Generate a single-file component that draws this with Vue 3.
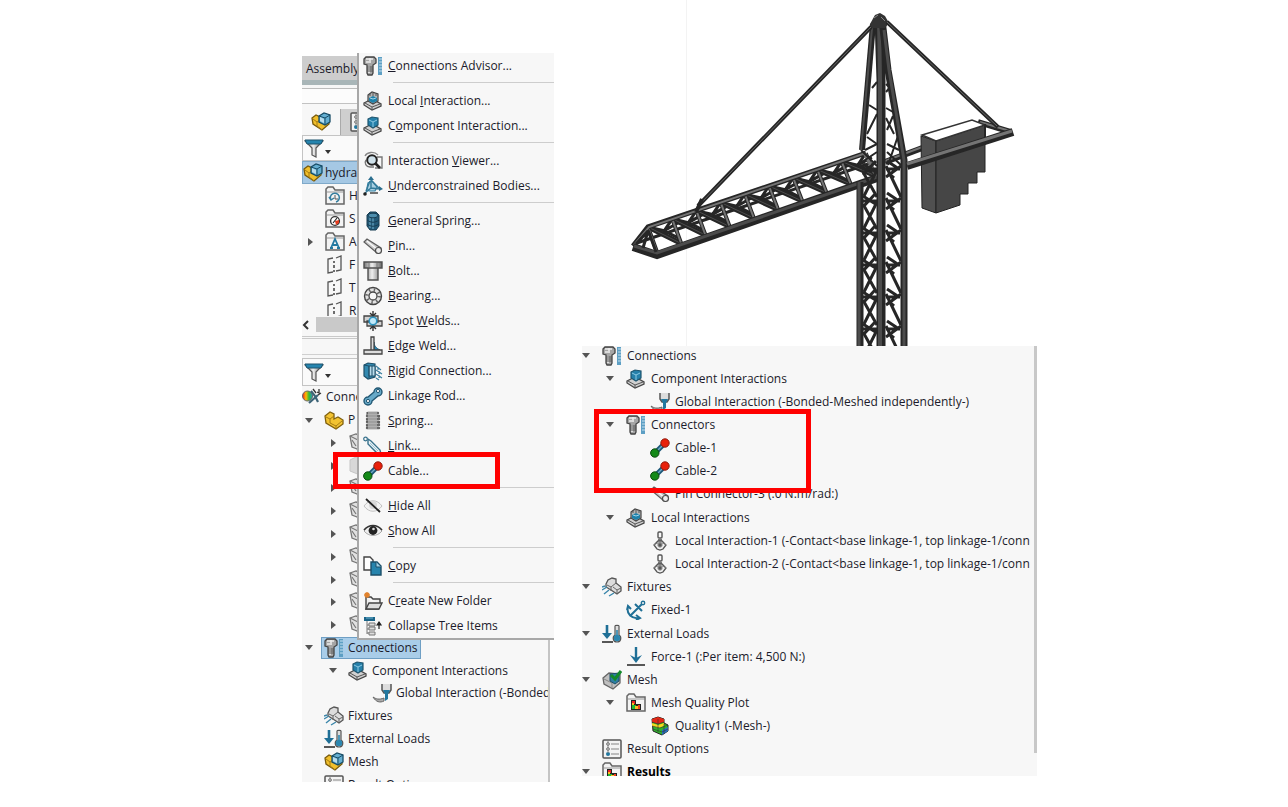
<script setup>
import { ref } from 'vue'

let menuGroups = ref([
  [{ icon: 'advisor', pre: '', key: 'C', post: 'onnections Advisor...' }],
  [
    { icon: 'local', pre: 'Local ', key: 'I', post: 'nteraction...' },
    { icon: 'component', pre: 'C', key: 'o', post: 'mponent Interaction...' }
  ],
  [
    { icon: 'viewer', pre: 'Interaction ', key: 'V', post: 'iewer...' },
    { icon: 'under', pre: '', key: 'U', post: 'nderconstrained Bodies...' }
  ],
  [
    { icon: 'gspring', pre: '', key: 'G', post: 'eneral Spring...' },
    { icon: 'pin', pre: '', key: 'P', post: 'in...' },
    { icon: 'bolt', pre: '', key: 'B', post: 'olt...' },
    { icon: 'bearing', pre: '', key: 'B', post: 'earing...' },
    { icon: 'spot', pre: 'Spot ', key: 'W', post: 'elds...' },
    { icon: 'edge', pre: '', key: 'E', post: 'dge Weld...' },
    { icon: 'rigid', pre: '', key: 'R', post: 'igid Connection...' },
    { icon: 'rod', pre: 'Linkage Rod...', key: '', post: '' },
    { icon: 'spring', pre: '', key: 'S', post: 'pring...' },
    { icon: 'link', pre: '', key: 'L', post: 'ink...' },
    { icon: 'cable', pre: 'Cable...', key: '', post: '', marked: true }
  ],
  [
    { icon: 'hide', pre: '', key: 'H', post: 'ide All' },
    { icon: 'show', pre: '', key: 'S', post: 'how All' }
  ],
  [{ icon: 'copy', pre: '', key: 'C', post: 'opy' }],
  [
    { icon: 'newfolder', pre: 'C', key: 'r', post: 'eate New Folder' },
    { icon: 'collapse', pre: 'Collapse Tree Items', key: '', post: '' }
  ]
])

let featureTree = ref([
  { icon: 'history', text: 'H' },
  { icon: 'sensor', text: 'S' },
  { icon: 'annot', text: 'A', arrow: 'right' },
  { icon: 'plane', text: 'F' },
  { icon: 'plane', text: 'T' },
  { icon: 'plane', text: 'R' }
])

let studyTree = ref([
  { icon: 'study', text: 'Conne', level: 'root' },
  { icon: 'partplain', text: 'P', level: 'one', arrow: 'down' },
  ...Array.from({ length: 9 }, (v, i) => ({
    icon: i === 1 ? 'bodyoff' : 'body',
    text: '',
    level: 'two',
    arrow: 'right'
  })),
  { icon: 'advisor', text: 'Connections', level: 'one', arrow: 'down', selected: true },
  { icon: 'component', text: 'Component Interactions', level: 'two', arrow: 'down' },
  { icon: 'global', text: 'Global Interaction (-Bonded', level: 'three' },
  { icon: 'fixtures', text: 'Fixtures', level: 'one' },
  { icon: 'loads', text: 'External Loads', level: 'one' },
  { icon: 'part', text: 'Mesh', level: 'one' },
  { icon: 'options', text: 'Result Options', level: 'one' }
])

let resultTree = ref([
  { icon: 'advisor', text: 'Connections', level: 'one', arrow: 'down' },
  { icon: 'component', text: 'Component Interactions', level: 'two', arrow: 'down' },
  { icon: 'global', text: 'Global Interaction (-Bonded-Meshed independently-)', level: 'three' },
  { icon: 'advisor', text: 'Connectors', level: 'two', arrow: 'down' },
  { icon: 'cable', text: 'Cable-1', level: 'three' },
  { icon: 'cable', text: 'Cable-2', level: 'three' },
  { icon: 'pin', text: 'Pin Connector-3 (:0 N.m/rad:)', level: 'three' },
  { icon: 'local', text: 'Local Interactions', level: 'two', arrow: 'down', group: true },
  { icon: 'contact', text: 'Local Interaction-1 (-Contact<base linkage-1, top linkage-1/conn', level: 'three' },
  { icon: 'contact', text: 'Local Interaction-2 (-Contact<base linkage-1, top linkage-1/conn', level: 'three' },
  { icon: 'fixtures', text: 'Fixtures', level: 'one', arrow: 'down' },
  { icon: 'anchor', text: 'Fixed-1', level: 'two' },
  { icon: 'loads', text: 'External Loads', level: 'one', arrow: 'down', group: true },
  { icon: 'force', text: 'Force-1 (:Per item: 4,500 N:)', level: 'two' },
  { icon: 'meshdone', text: 'Mesh', level: 'one', arrow: 'down' },
  { icon: 'plots', text: 'Mesh Quality Plot', level: 'two', arrow: 'down' },
  { icon: 'quality', text: 'Quality1 (-Mesh-)', level: 'three' },
  { icon: 'options', text: 'Result Options', level: 'one' },
  { icon: 'plots', text: 'Results', level: 'one', arrow: 'down', bold: true }
])

//------------------------------crane geometry---------------------------//

// boom: top and bottom chord nodes, nine bays
let top = (i) => [648 + i * 24.2, 227 - i * 8.2]
let bottom = (i) => [657 + i * 24.2, 252 - i * 8.5]
let back = (i) => [640 + i * 24.2, 239 - i * 8.2]

let posts = ''
let braces = ''
let backBraces = ''
for (let i = 0; i < 10; i++) {
  posts += `M${top(i)}L${bottom(i)}`
  if (i < 9) {
    braces += `M${top(i)}L${bottom(i + 1)}`
    backBraces += `M${back(i + 1)}L${top(i)}M${back(i + 1)}l14 -8M${back(i + 1)}l16 8M${back(i + 1)}l8 -12`
  }
}

// mast: zigzag lattice between the legs, one cell every 32px
let lattice = ''
let latticeBack = ''
for (let y = 164; y < 350; y += 32) {
  lattice += `M886 ${y + 2}L901 ${y + 33}M901 ${y + 2}L886 ${y + 13}M886 ${y + 5}H900M887 ${y - 3}l12 8M888 ${y + 9}l6 5`
  latticeBack += `M863 ${y + 8}l14 25M877 ${y + 6}l-13 26M862 ${y + 5}h15M863 ${y}l14 9M876 ${y - 3}l-13 14`
}

let towerLattice =
  'M872 88L877 82M869 105L877 110M867 134L877 114M867 137L877 144M865 150L877 144M862 162L877 152M861 150L877 166' +
  'M886 84L892 90M886 92L891 86M886 108L893 112M887 130L893 116M886 118L894 134M887 144L899 150M888 165L898 136M887 152L902 166'
</script>

<template>
  <svg class="sprite" aria-hidden="true">
    <defs>
      <linearGradient id="metal" x1="0" x2="1">
        <stop offset="0" stop-color="#777" />
        <stop offset=".45" stop-color="#eee" />
        <stop offset="1" stop-color="#666" />
      </linearGradient>
      <linearGradient id="rainbow" x1="0" x2="1">
        <stop offset="0" stop-color="#e22" />
        <stop offset=".35" stop-color="#fb0" />
        <stop offset=".65" stop-color="#3b3" />
        <stop offset="1" stop-color="#29c" />
      </linearGradient>
    </defs>
    <symbol id="advisor" viewBox="0 0 20 20">
      <path d="M15 1h4v18h-4z" fill="#5d9fc4" />
      <path d="M16 3h3M16 6h3M16 9h3M16 12h3M16 15h3" stroke="#c5dfed" />
      <path d="M1 3l2-2h8l2 2v4l-3 2v8l-1 2H5l-1-2V9L1 8z" fill="#a5a5a5" stroke="#444" stroke-width="1.3" />
      <path d="M3 3h7M3 6h3M7 2v5M6 10v7" stroke="#ececec" stroke-width="1.6" />
      <path d="M4 11h6M4 13h6M4 15h6" stroke="#555" />
    </symbol>
    <symbol id="local" viewBox="0 0 20 20">
      <path d="M1 12l8-4 9 5v2l-9 4-8-5z" fill="#d0d0d0" stroke="#484848" stroke-width="1.3" />
      <path d="M2 12l7 4 8-3M9 16v3" fill="none" stroke="#555" />
      <path d="M5 4l4-3 6 2v7l-5 3-5-3z" fill="#b5b5b5" stroke="#444" stroke-width="1.2" />
      <path d="M7 2v3M10 2v3M13 3v2" stroke="#555" />
      <path d="M6 7l4-2 4 2v3l-4 2-4-2z" fill="#1e81aa" />
      <path d="M7 7l3 1 3-1" fill="none" stroke="#a5d5e8" />
    </symbol>
    <symbol id="component" viewBox="0 0 20 20">
      <path d="M1 12l8-4 9 5v2l-9 4-8-5z" fill="#d0d0d0" stroke="#484848" stroke-width="1.3" />
      <path d="M2 12l7 4 8-3M9 16v3" fill="none" stroke="#555" />
      <path d="M5 3l4-2 6 1v7l-5 3-5-3z" fill="#2580aa" stroke="#20566f" stroke-width="1.2" />
      <path d="M6 4l4 2 4-2M10 6v5" fill="none" stroke="#8cc9e3" />
    </symbol>
    <symbol id="viewer" viewBox="0 0 20 20">
      <path d="M3 9c-2 3 0 7 4 7h4M14 6h5v11h-7" fill="none" stroke="#777" stroke-width="1.4" />
      <path d="M2 5c2-4 9-5 13-1" fill="none" stroke="#888" stroke-width="1.3" />
      <circle cx="9" cy="9" r="4.800" fill="#cfe1ea" stroke="#222" stroke-width="2" />
      <path d="M12 12l5 5" stroke="#222" stroke-width="2.600" />
    </symbol>
    <symbol id="under" viewBox="0 0 20 20">
      <path d="M5 7l4-2 5 6-2 4H6l-2-3z" fill="#a9d0e2" stroke="#3583a5" stroke-width="1.2" />
      <path d="M8 2v10l9 1M8 12l-6 5M12 13l4-1M8 4l8 8M7 5l-4 10" fill="none" stroke="#347a99" stroke-width="1.4" />
      <path d="M8 0l3 4H5zM20 13l-4-3v5z" fill="#2a6e8e" />
      <circle cx="2" cy="18" r="1.800" fill="#222" />
      <path d="M7 17h8" stroke="#3a3a3a" stroke-width="1.4" />
    </symbol>
    <symbol id="gspring" viewBox="0 0 20 20">
      <path d="M4 4l3-3h6l3 3v11l-3 4H7l-3-4z" fill="#235a78" stroke="#173d52" />
      <path d="M7 5v12M10 6v12" stroke="#5f9dbb" stroke-width="1.3" />
      <ellipse cx="10" cy="4.500" rx="4.500" ry="2.300" fill="#4d8eae" stroke="#173d52" />
      <path d="M4 9c4 3 8 3 12 0M4 13c4 3 8 3 12 0" fill="none" stroke="#173d52" />
    </symbol>
    <symbol id="pin" viewBox="0 0 20 20">
      <path d="M1 6l3-3 14 9c1 3-1 6-4 5z" fill="#c9c9c9" stroke="#5d5d5d" stroke-width="1.2" />
      <path d="M4 5l11 9" stroke="#fafafa" stroke-width="1.4" />
      <circle cx="15.500" cy="14.500" r="3" fill="#eee" stroke="#4d4d4d" stroke-width="1.2" />
    </symbol>
    <symbol id="bolt" viewBox="0 0 20 20">
      <path d="M1 1h18v6H1zM5 7h10v12H5z" fill="url(#metal)" stroke="#4f4f4f" stroke-width="1.4" />
      <path d="M6 2v4M14 2v4" stroke="#777" />
    </symbol>
    <symbol id="bearing" viewBox="0 0 20 20">
      <circle cx="10" cy="10" r="8.500" fill="#e2e2e2" stroke="#444" stroke-width="1.4" />
      <circle cx="10" cy="10" r="6.200" fill="none" stroke="#666" stroke-width="3.400" stroke-dasharray="1.400 3.470" />
      <circle cx="10" cy="10" r="4" fill="#f7f7f7" stroke="#444" stroke-width="1.3" />
    </symbol>
    <symbol id="spot" viewBox="0 0 20 20">
      <path d="M1 5h14v6H1zM4 10h15v5H4z" fill="#d2d2d2" stroke="#444" stroke-width="1.3" />
      <path d="M10 0v5M7 2l3 3 3-3M10 20v-5M7 18l3-3 3 3" fill="none" stroke="#333" stroke-width="1.4" />
      <circle cx="10" cy="10" r="3.800" fill="#c3eafa" stroke="#2d94c0" stroke-width="1.6" />
    </symbol>
    <symbol id="edge" viewBox="0 0 20 20">
      <path d="M11 6c0 4 2 6 6 8h-6z" fill="#2688b5" stroke="#1d536d" />
      <path d="M1 14h18v4H1zM8 1h3v13H8z" fill="#ddd" stroke="#444" stroke-width="1.3" />
    </symbol>
    <symbol id="rigid" viewBox="0 0 20 20">
      <path d="M1 4l4-2 7 1v13l-7 2-4-3z" fill="#3289b0" stroke="#1d4f69" stroke-width="1.2" />
      <path d="M6 5h6v10H6z" fill="#b9dcec" stroke="#1d4f69" />
      <path d="M1 4l5 1v12M9 5v10" fill="none" stroke="#1d4f69" />
      <path d="M13 5l5 4M13 9l6 4M13 13l6 4M13 17l3 2M15 6v3M16 10v3M16 14v3" stroke="#397fa0" stroke-width="1.2" />
    </symbol>
    <symbol id="rod" viewBox="0 0 20 20">
      <path d="M11 6a4 4 0 1 1 4 4l-6 5a4 4 0 1 1-4-4z" fill="#67a9c8" stroke="#215773" stroke-width="1.4" />
      <circle cx="15" cy="5" r="1.600" fill="#f7f7f7" stroke="#215773" />
      <circle cx="5" cy="15" r="1.600" fill="#f7f7f7" stroke="#215773" />
    </symbol>
    <symbol id="spring" viewBox="0 0 20 20">
      <path d="M5 2h10M4 5h12M4 8h12M4 11h12M4 14h12M4 17h12" stroke="#6a6a6a" stroke-width="2.400" stroke-linecap="round" />
      <path d="M5 2h9M5 5h9M5 8h9M5 11h9M5 14h9M5 17h9" stroke="#d5d5d5" stroke-width="1" />
      <path d="M4 1v3M16 4v3M4 8v3M16 10v3M4 14v3" stroke="#555" />
    </symbol>
    <symbol id="link" viewBox="0 0 20 20">
      <path d="M5 3l3 2 9 9 1 4-4-1-9-9z" fill="#e8f1f5" stroke="#37718c" stroke-width="1.4" />
      <path d="M7 7l8 8" stroke="#9cc4d6" />
      <circle cx="2.500" cy="3" r="1.800" fill="#f7f7f7" stroke="#37718c" stroke-width="1.2" />
      <circle cx="17.500" cy="17.500" r="1.500" fill="#37718c" />
    </symbol>
    <symbol id="cable" viewBox="0 0 20 20">
      <path d="M5 15L15 5" stroke="#1e5878" stroke-width="5" />
      <path d="M5 15L15 5" stroke="#6fa9c7" stroke-width="1.5" />
      <circle cx="15" cy="5" r="4.200" fill="#e8200b" stroke="#8f1c10" />
      <circle cx="4.800" cy="15" r="4.200" fill="#148a18" stroke="#0e4a12" />
    </symbol>
    <symbol id="hide" viewBox="0 0 20 20">
      <path d="M1 10c5-7 13-7 18 0-5 7-13 7-18 0z" fill="#f3f3f3" stroke="#c2c2c2" />
      <circle cx="10" cy="9" r="4" fill="#d8d8d8" />
      <path d="M3 3l14 13" stroke="#222" stroke-width="1.8" />
    </symbol>
    <symbol id="show" viewBox="0 0 20 20">
      <path d="M1 10c5-7 13-7 18 0-5 6-13 6-18 0z" fill="#eee" stroke="#aaa" />
      <path d="M1 9c5-6 13-6 18 0" fill="none" stroke="#333" stroke-width="1.6" />
      <circle cx="10" cy="9.500" r="4.400" fill="#222" />
      <circle cx="10.500" cy="8" r="1.300" fill="#ddd" />
    </symbol>
    <symbol id="copy" viewBox="0 0 20 20">
      <path d="M1 1h6l3 3v10H1z" fill="#fff" stroke="#444" stroke-width="1.4" />
      <path d="M8 6h6l4 4v9H8z" fill="#2784ad" stroke="#1c4f69" stroke-width="1.4" />
      <path d="M13 6v5h5" fill="#a3d0e4" stroke="#1c4f69" />
    </symbol>
    <symbol id="newfolder" viewBox="0 0 20 20">
      <path d="M3 6h5l2 2h7v4M3 6v12h13" fill="#eee" stroke="#444" stroke-width="1.4" />
      <path d="M6 12h13l-3 6H3z" fill="#ddd" stroke="#444" stroke-width="1.4" />
      <path d="M4 1v6M1 4h6M2 2l4 4M6 2L2 6" stroke="#e0812c" stroke-width="1.5" />
    </symbol>
    <symbol id="collapse" viewBox="0 0 20 20">
      <path d="M1 1h11v4H1z" fill="#1b6488" />
      <path d="M3 2h7" stroke="#6fb4d2" />
      <path d="M4 5v13M4 9h3M4 13h3M4 17h3" fill="none" stroke="#777" />
      <path d="M6 7h6v3H6zM6 11h6v3H6zM6 16h6v3H6z" fill="#ddd" stroke="#777" />
      <path d="M16 13V8M14 9l2-3 2 3z" stroke="#222" stroke-width="1.2" fill="#222" />
    </symbol>
    <symbol id="part" viewBox="0 0 20 20">
      <path d="M1 6l4-3 4 2v5l9-4v6l-7 6-9-6z" fill="#f1bf2b" stroke="#785a0c" stroke-width="1.3" />
      <path d="M2 7l4 3v4l5 4M6 10l3-2" fill="none" stroke="#a57c12" />
      <path d="M8 4l5-3 6 2v7l-5 3-6-3z" fill="#64aed1" stroke="#174c66" stroke-width="1.3" />
      <path d="M8 4l6 2 5-3M14 6v7" fill="none" stroke="#174c66" />
      <path d="M9 5l4 2v4l-4-2z" fill="#b8dcec" />
    </symbol>
    <symbol id="partplain" viewBox="0 0 20 20">
      <path d="M1 6l5-4 4 2v5l4-2 5 3v4l-7 5-10-6z" fill="#f3c331" stroke="#80610f" stroke-width="1.3" />
      <path d="M2 7l4 2v4l6 3 6-5M6 9l4-3M12 16v3" fill="none" stroke="#a57c12" />
    </symbol>
    <symbol id="filter" viewBox="0 0 20 20">
      <path d="M1 3h18l-7 7v9l-4-2v-7z" fill="url(#metal)" stroke="#555" stroke-width="1.2" />
      <path d="M1 2h18l-2 4H3z" fill="#2584ae" stroke="#1d536d" />
    </symbol>
    <symbol id="folder" viewBox="0 0 20 20">
      <path d="M1 18V3l2-2h5l2 3h9v14z" fill="#f3f3f3" stroke="#666" stroke-width="1.5" />
      <path d="M2 6h16" stroke="#999" />
    </symbol>
    <symbol id="history" viewBox="0 0 20 20">
      <use href="#folder" />
      <path d="M6 14a4.500 4.500 0 1 1 5 2M4 11l2 3 3-2" fill="none" stroke="#347d9e" stroke-width="1.5" />
      <path d="M10 9v4h3" fill="none" stroke="#555" />
    </symbol>
    <symbol id="sensor" viewBox="0 0 20 20">
      <use href="#folder" />
      <circle cx="10" cy="12" r="4.400" fill="#fff" stroke="#333" stroke-width="1.4" />
      <path d="M10 12l4-1v3l-3 2z" fill="#e43a1c" />
      <path d="M8 14l4-5" stroke="#222" stroke-width="1.2" />
    </symbol>
    <symbol id="annot" viewBox="0 0 20 20">
      <use href="#folder" />
      <path d="M6 16l4-9 4 9M5 16h3M12 16h3M8 13h4" fill="none" stroke="#2278a0" stroke-width="1.8" />
    </symbol>
    <symbol id="plane" viewBox="0 0 20 20">
      <path d="M8 3L3 4v14l5-1M11 3l5-2v14l-5 1" fill="none" stroke="#555" stroke-width="1.3" />
      <path d="M9 6v2M9 10v3M9 15v2" stroke="#333" stroke-width="1.4" />
    </symbol>
    <symbol id="study" viewBox="0 0 20 20">
      <circle cx="5.500" cy="9" r="5" fill="url(#rainbow)" stroke="#666" />
      <path d="M9 4l4 5 3 6M16 8l-9 8" fill="none" stroke="#3d6477" stroke-width="2.200" />
      <path d="M11 2l3 4M17 2v4l-2-1M19 6l-3 2" fill="none" stroke="#333" stroke-width="1.3" />
    </symbol>
    <symbol id="body" viewBox="0 0 20 20">
      <path d="M2 3l6-2 11 3v9l-7 6-3-3-5-2z" fill="#e0e0e0" stroke="#777" stroke-width="1.3" />
      <path d="M2 3l8 4v11M10 7l8-3M4 7l4 6" fill="none" stroke="#777" stroke-width="1.2" />
    </symbol>
    <symbol id="bodyoff" viewBox="0 0 20 20">
      <path d="M2 4l6-3 11 3v9l-7 6-10-4z" fill="#d8d8d8" stroke="#c5c5c5" />
    </symbol>
    <symbol id="global" viewBox="0 0 20 20">
      <path d="M10 1v6l2 3h5l2-3V1" fill="#ddd" stroke="#555" stroke-width="1.5" />
      <path d="M11 7h7l-2 4v5l-3 2v-7z" fill="#2278a0" />
      <path d="M1 14c3 2 6 3 11 1v3c-4 2-8 1-11-4z" fill="#aaa" stroke="#666" />
    </symbol>
    <symbol id="fixtures" viewBox="0 0 20 20">
      <path d="M4 7l2-4 4-2 4 1v4l5 4v4l-4 3-6-4-5-3z" fill="#dcdcdc" stroke="#555" stroke-width="1.3" />
      <path d="M5 8l4 2 5-4M9 10v4M11 10l4 3 4-2M15 13v4" fill="none" stroke="#666" />
      <path d="M0 13l5-3M2 17l5-4M7 19l5-3M0 10l3-1" stroke="#3a86aa" stroke-width="1.4" />
    </symbol>
    <symbol id="loads" viewBox="0 0 20 20">
      <path d="M5 1v10" stroke="#1f6f96" stroke-width="2.600" />
      <path d="M0 9h10l-5 6z" fill="#1f6f96" />
      <path d="M0 18h11" stroke="#444" stroke-width="1.8" />
      <path d="M13 2c0-1 4-1 4 0v9c3 2 2 7-2 7s-5-5-2-7z" fill="#ddd" stroke="#555" stroke-width="1.2" />
      <circle cx="15" cy="14" r="3.200" fill="#2b86b0" />
      <path d="M15 6v8" stroke="#2b86b0" stroke-width="1.6" />
    </symbol>
    <symbol id="contact" viewBox="0 0 20 20">
      <rect x="8" y="1" width="4" height="6" rx="1" fill="#f7f7f7" stroke="#555" stroke-width="1.4" />
      <path d="M8 8h4v2H8z" fill="#777" />
      <path d="M4 14l4-4h4l4 4-3 4-3 1-3-1z" fill="#f0f0f0" stroke="#555" stroke-width="1.3" />
      <circle cx="10" cy="14" r="2.200" fill="#555" stroke="#999" />
      <path d="M4 14c3-3 9-3 12 0" fill="none" stroke="#777" />
    </symbol>
    <symbol id="anchor" viewBox="0 0 20 20">
      <path d="M5 15L16 4M9 4l7 7M2 7c-2 7 4 12 11 11M1 10l1-4 3 3M10 15l4 3-4 2" fill="none" stroke="#1f6f96" stroke-width="2" />
      <circle cx="17" cy="3" r="1.700" fill="#f7f7f7" stroke="#1f6f96" stroke-width="1.4" />
    </symbol>
    <symbol id="force" viewBox="0 0 20 20">
      <path d="M10 0v13" stroke="#1f6f96" stroke-width="2.400" />
      <path d="M4 8l6 3 6-3-6 8z" fill="#1f6f96" />
      <path d="M1 18h18" stroke="#444" stroke-width="1.8" />
    </symbol>
    <symbol id="meshdone" viewBox="0 0 20 20">
      <path d="M1 8l6-5 11 1v9l-7 6-9-5z" fill="#c0c0c0" stroke="#666" stroke-width="1.3" />
      <path d="M2 9l8 4v5" fill="none" stroke="#888" />
      <path d="M8 4l9-1v8l-4 3-5-3z" fill="#2d7da2" stroke="#1d4f69" />
      <path d="M9 5l4 4 6-8" fill="none" stroke="#138a2a" stroke-width="3" />
    </symbol>
    <symbol id="plots" viewBox="0 0 20 20">
      <use href="#folder" />
      <path d="M5 7h5v4h5v6H5z" fill="#222" />
      <path d="M6 8h3v3H6z" fill="#e22" />
      <path d="M6 10h2v3H6z" fill="#fb2" />
      <path d="M6 12h4v4H6z" fill="#2b3" />
      <path d="M9 13h3v3H9z" fill="#fb2" />
      <path d="M12 12h2v4h-2z" fill="#e42" />
    </symbol>
    <symbol id="quality" viewBox="0 0 20 20">
      <path d="M2 3l6-2 6 2v4l4 2v6l-6 4-9-4z" fill="#2fb52c" stroke="#222" />
      <path d="M2 3l6-2 6 2v3l-6 2-6-2z" fill="#e32716" />
      <path d="M2 7l6 2 6-2v3l-5 2-7-2z" fill="#f4d81e" />
      <path d="M12 14l6-3v4l-6 4z" fill="#2671c4" />
      <path d="M2 6l6 2 6-2M2 10l8 2 8-3M3 13l9 3 6-3M8 3v13M14 8v10" fill="none" stroke="#333" stroke-width=".6" />
    </symbol>
    <symbol id="options" viewBox="0 0 20 20">
      <rect x="1" y="1" width="18" height="18" rx="1" fill="#f3f3f3" stroke="#555" stroke-width="1.5" />
      <path d="M9 5h8M9 10h8M9 15h8" stroke="#aaa" stroke-width="1.3" />
      <circle cx="6" cy="5" r="1.400" fill="none" stroke="#777" />
      <circle cx="6" cy="10" r="1.400" fill="none" stroke="#777" />
      <circle cx="6" cy="15" r="2" fill="#2278a0" />
      <path d="M6 2v12" stroke="#888" />
    </symbol>
  </svg>

  <main class="page">
    <section class="manager">
      <div class="panel">
        <div class="bar">Assembly</div>
        <div class="strip"></div>
        <div class="tabs">
          <button class="tab active" aria-label="Feature tree"><svg class="icon"><use href="#part" /></svg></button>
          <button class="tab" aria-label="Properties"><svg class="icon"><use href="#options" /></svg></button>
        </div>
        <button class="filter" aria-label="Filter features">
          <svg class="icon"><use href="#filter" /></svg><span class="caret"></span>
        </button>
        <div class="model"><svg class="icon"><use href="#part" /></svg>hydra</div>
        <ul class="features">
          <li v-for="row in featureTree" :key="row.text" class="row">
            <span class="toggle"><i v-if="row.arrow" :class="['arrow', row.arrow]"></i></span>
            <svg class="icon"><use :href="'#' + row.icon" /></svg>
            <span class="label">{{ row.text }}</span>
          </li>
        </ul>
        <div class="hscroll">
          <svg class="chev" viewBox="0 0 8 10"><path d="M6 1L2 5l4 4" /></svg>
          <span class="thumb"></span>
        </div>
        <div class="splitter"></div>
        <button class="filter second" aria-label="Filter study">
          <svg class="icon"><use href="#filter" /></svg><span class="caret"></span>
        </button>
        <div class="study">
          <ul class="studyrows">
            <li v-for="(row, i) in studyTree" :key="i" :class="['row', row.level]">
              <button v-if="row.arrow" class="toggle" aria-label="Toggle"><i :class="['arrow', row.arrow]"></i></button>
              <span v-else class="toggle"></span>
              <span :class="['node', { selected: row.selected }]">
                <svg class="icon"><use :href="'#' + row.icon" /></svg>
                <span class="label">{{ row.text }}</span>
              </span>
            </li>
          </ul>
        </div>
      </div>

      <div class="menu" role="menu">
        <div v-for="(group, g) in menuGroups" :key="g" class="group">
          <button v-for="item in group" :key="item.icon" class="item" role="menuitem">
            <svg class="icon"><use :href="'#' + item.icon" /></svg>
            <span>{{ item.pre }}<u v-if="item.key">{{ item.key }}</u>{{ item.post }}</span>
            <span v-if="item.marked" class="mark"></span>
          </button>
        </div>
      </div>
    </section>

    <section class="result">
      <svg class="crane" viewBox="582 0 455 346" role="img" aria-label="Tower crane model">
        <path d="M686.500 0V346" stroke="#f3f3f3" />
        <!-- boom -->
        <path :d="backBraces" class="dark" stroke-width="3" />
        <path d="M634 244L868 164" class="dark" stroke-width="3" />
        <path :d="braces" class="dark" stroke-width="5" />
        <path :d="braces" class="mid" stroke-width="1" />
        <path :d="posts" class="dark" stroke-width="4" />
        <path :d="posts" class="light" stroke-width="2" />
        <path d="M633 246L648 227L866 153" class="dark" stroke-width="5" />
        <path d="M634 245L649 227L866 153" class="light" stroke-width="2" />
        <path d="M633 247L657 255L880 177" class="dark" stroke-width="8" />
        <path d="M634 246L657 253L880 176" class="mid" stroke-width="3" />
        <path d="M636 244L648 231L643 248M648 230L656 252" class="dark" stroke-width="3" />
        <path d="M864 153L877 176" class="light" stroke-width="3" />
        <!-- counter jib behind the mast -->
        <path d="M885 162L925 147" class="dark" stroke-width="6" />
        <path d="M885 161L925 146" class="light" stroke-width="2" />
        <path d="M978 122L1011 132" class="dark" stroke-width="6" />
        <path d="M980 122L1010 131" class="light" stroke-width="2" />
        <!-- mast -->
        <path :d="latticeBack" class="dark" stroke-width="3" />
        <path :d="lattice" class="dark" stroke-width="3" />
        <path :d="towerLattice" class="dark" stroke-width="2" />
        <path d="M873 24L862 150" class="dark" stroke-width="6" />
        <path d="M872 28L861 150" class="mid" stroke-width="2" />
        <path d="M860 182V346" class="dark" stroke-width="7" />
        <path d="M859 182V346" class="mid" stroke-width="3" />
        <path d="M879 18L881 80V346" class="dark" stroke-width="9" />
        <path d="M879 18L880 80V346" class="mid" stroke-width="4" />
        <path d="M882 20L888 70L904 160V346" class="dark" stroke-width="7" />
        <path d="M884 30L889 70L904 160V346" class="mid" stroke-width="3" />
        <path d="M870 24l5-9 5-2 5 3 4 7-4 5h-14z" fill="#333" />
        <path d="M874 18l4-3M881 17l4 4" stroke="#888" />
        <!-- counterweight -->
        <path d="M921 136L936 141V213L922 208z" fill="#505050" stroke="#222" />
        <path d="M936 141L985 125V172H977V183H968V194H960V205L936 213z" fill="#464646" stroke="#222" />
        <path d="M922 135L972 120L985 125L936 141z" fill="#fff" stroke="#333" stroke-width="1.5" />
        <path d="M907 166L1013 132" class="dark" stroke-width="8" />
        <path d="M907 164L1012 131" class="light" stroke-width="3" />
        <path d="M985 124V137" class="dark" stroke-width="2" />
        <!-- cables -->
        <path d="M871 27L698 206M887 22L998 127" class="dark" stroke-width="4" />
        <path d="M871 27L700 204M887 22L997 126" stroke="#666" />
        <path d="M696 212L702 199" class="dark" stroke-width="4" />
      </svg>

      <div class="panel tree">
        <ul class="resultrows">
          <li v-for="row in resultTree" :key="row.text" :class="['row', row.level, { group: row.group, bold: row.bold }]">
            <button v-if="row.arrow" class="toggle" aria-label="Toggle"><i :class="['arrow', row.arrow]"></i></button>
            <span v-else class="toggle"></span>
            <span class="node">
              <svg class="icon"><use :href="'#' + row.icon" /></svg>
              <span class="label">{{ row.text }}</span>
            </span>
          </li>
        </ul>
        <span class="vscroll"></span>
        <span class="mark"></span>
      </div>
    </section>
  </main>
</template>

<style>
body {
  background: #fff;
}
</style>

<style scoped>
.sprite {
  position: absolute;
  width: 0;
  height: 0;
}
.page {
  display: grid;
  grid-template-columns: 302fr 252fr 28fr 455fr 251fr;
  align-items: start;
  font-family: 'Open Sans', 'Noto Sans', sans-serif;
  font-size: 12px;
  line-height: 16px;
  color: #1b1b2b;
}
.manager {
  grid-column: 2;
  min-width: 0;
  position: relative;
  padding: 56px 4px 24px 0;
}
.result {
  grid-column: 4;
  min-width: 0;
}
ul {
  list-style: none;
  margin: 0;
  padding: 0;
}
button {
  border: none;
  background: none;
  padding: 0;
  margin: 0;
  font: inherit;
  color: inherit;
  text-align: left;
}
.icon {
  width: 20px;
  height: 20px;
  flex: none;
}
.panel {
  position: relative;
  background: #f7f7f7;
  overflow: hidden;
}
.manager .panel {
  border-right: 2px solid #c4c4c4;
}

/* feature manager */
.bar {
  height: 24px;
  line-height: 26px;
  padding-left: 4px;
  background: #cdcdcd;
}
.strip {
  height: 5px;
  background: #a9b6b8;
  margin-bottom: 3px;
}
.tabs {
  display: flex;
  border-top: 1px solid #bdbdbd;
  padding-top: 20px;
  height: 26px;
  background: linear-gradient(#fcfcfc 14px, #c2c2c2 14px, #c2c2c2 15px, #f7f7f7 15px);
}
.tab {
  width: 38px;
  height: 26px;
  display: flex;
  align-items: center;
  justify-content: center;
  background: #cfcfcf;
  border-left: 1px solid #aaa;
}
.tab.active {
  background: #f7f7f7;
  border-left: none;
}
.filter {
  display: flex;
  align-items: center;
  gap: 1px;
  width: 100%;
  height: 26px;
  padding-left: 1px;
  background: #fafafa;
  border: 1px solid #c4c4c4;
}
.filter.second {
  height: 28px;
}
.caret {
  border: 3px solid transparent;
  border-top: 4px solid #333;
  border-bottom: none;
  margin-top: 8px;
}
.model {
  display: flex;
  align-items: center;
  gap: 2px;
  height: 23px;
  background: #a5c8e4;
  border: 1px solid #7fa9c9;
  white-space: nowrap;
  box-sizing: border-box;
}
.features {
  height: 132px;
  overflow: hidden;
}
.row {
  display: flex;
  align-items: center;
  height: 23px;
  white-space: nowrap;
}
.features .icon {
  margin: 0 4px 0 7px;
}
.toggle {
  width: 16px;
  height: 16px;
  display: flex;
  align-items: center;
  justify-content: center;
  flex: none;
}
.arrow {
  width: 0;
  height: 0;
  border: 4px solid transparent;
}
.arrow.down {
  border-top: 5px solid #555;
  border-bottom: none;
}
.arrow.right {
  border-left: 5px solid #555;
  border-right: none;
}
.hscroll {
  display: flex;
  height: 17px;
  align-items: center;
}
.chev {
  width: 8px;
  height: 10px;
  margin-right: 6px;
  fill: none;
  stroke: #333;
  stroke-width: 2;
}
.thumb {
  flex: 1;
  height: 15px;
  background: #c9c9c9;
}
.splitter {
  height: 15px;
  margin: 3px 0;
  border-top: 3px double #c9c9c9;
  border-bottom: 1px solid #d0d0d0;
}

/* study tree */
.study {
  height: 396px;
  overflow: hidden;
}
.studyrows {
  display: grid;
  grid-auto-rows: 1fr;
  height: 410px;
}
.studyrows .row {
  height: auto;
}
.studyrows .toggle {
  width: 14px;
  margin-right: 5px;
}
.root {
  margin-left: -22px;
}
.two {
  padding-left: 24px;
}
.three {
  padding-left: 48px;
}
.node {
  display: flex;
  align-items: center;
  gap: 4px;
  padding: 0 3px;
}
.node.selected {
  background: #a9cde9;
  outline: 1px solid #6f9fc4;
  outline-offset: -1px;
  height: 22px;
}

/* context menu */
.menu {
  position: absolute;
  top: 53px;
  left: 55px;
  right: 0;
  background: #f7f7f7;
  border-left: 2px solid #a8a8a8;
  border-bottom: 2px solid #a8a8a8;
}
.group + .group::before {
  content: '';
  display: block;
  height: 1px;
  margin: 4px 0 4px 34px;
  border-top: 1px solid #cdcdcd;
}
.item {
  position: relative;
  display: flex;
  align-items: center;
  gap: 5px;
  width: 100%;
  height: 25px;
  padding-left: 4px;
  white-space: nowrap;
}
.mark {
  position: absolute;
  border: 5px solid #f00;
  box-sizing: border-box;
}
.item .mark {
  left: -26px;
  top: -6px;
  width: 167px;
  height: 37px;
}

/* result tree */
.crane {
  display: block;
  width: 100%;
}
.dark {
  fill: none;
  stroke: #262626;
}
.mid {
  fill: none;
  stroke: #4c4c4c;
}
.light {
  fill: none;
  stroke: #747474;
}
.tree {
  padding-right: 4px;
  height: 430px;
}
.resultrows {
  overflow: hidden;
  margin-top: -2px;
}
.resultrows .toggle {
  margin-left: -4px;
}
.resultrows .node {
  gap: 5px;
  padding: 0 0 0 8px;
}
.row.group {
  margin-top: 1px;
}
.bold {
  font-weight: 700;
  color: #000;
}
.vscroll {
  position: absolute;
  top: 0;
  right: 0;
  width: 3px;
  height: 407px;
  background: #c8c8c8;
}
.tree .mark {
  left: 12px;
  top: 63px;
  width: 217px;
  height: 84px;
}
</style>
